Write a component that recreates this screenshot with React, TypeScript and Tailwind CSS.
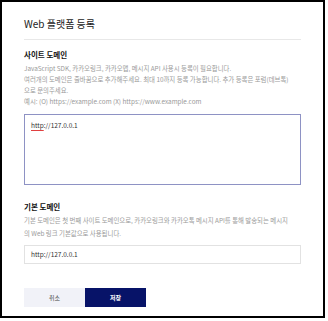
import React from 'react';

const font = { fontFamily: '"Noto Sans CJK KR", "Noto Sans", sans-serif' };

const App: React.FC = () => {
  return (
    <div className="w-[328px] h-[321px] bg-white" style={font}>
      <div className="w-[325px] h-[318px] border-2 border-black bg-white px-[22px] flex flex-col">
        <h1 className="mt-[15px] text-[10px] leading-[14px] text-[#222] font-normal">Web 플랫폼 등록</h1>
        <div className="mt-[8px] h-px bg-[#e8e8e8]" />

        <h2 className="mt-[9px] text-[7.5px] leading-[11px] font-bold text-[#111]">사이트 도메인</h2>
        <div className="mt-[3px] text-[6.4px] leading-[11px] text-[#9a9a9a] whitespace-nowrap">
          <p>JavaScript SDK, 카카오링크, 카카오맵, 메시지 API 사용시 등록이 필요합니다.</p>
          <p>여러개의 도메인은 줄바꿈으로 추가해주세요. 최대 10까지 등록 가능합니다. 추가 등록은 포럼(데브톡)</p>
          <p>으로 문의주세요.</p>
          <p>예시: (O) https://example.com (X) https://www.example.com</p>
        </div>
        <div className="mt-[7px] w-full h-[71px] border border-[#8e92c4] px-[6px] py-[5px] text-[6.5px] leading-[10px] text-[#333]">
          <span className="underline decoration-[#e04040] decoration-1 underline-offset-[2px]">http</span>://127.0.0.1
        </div>

        <h2 className="mt-[16px] text-[7.5px] leading-[11px] font-bold text-[#111]">기본 도메인</h2>
        <div className="mt-[2px] text-[6.4px] leading-[13px] text-[#9a9a9a] whitespace-nowrap">
          <p>기본 도메인은 첫 번째 사이트 도메인으로, 카카오링크와 카카오톡 메시지 API를 통해 발송되는 메시지</p>
          <p>의 Web 링크 기본값으로 사용됩니다.</p>
        </div>
        <div className="mt-[5px] h-[19px] border border-[#e2e2e2] px-[6px] flex items-center text-[6.5px] text-[#333]">
          http://127.0.0.1
        </div>

        <div className="mt-[24px] flex">
          <button className="w-[61px] h-[19px] bg-[#f1f2f8] text-[6px] text-[#444]">취소</button>
          <button className="w-[61px] h-[19px] bg-[#071368] text-[6px] text-white font-bold">저장</button>
        </div>
      </div>
    </div>
  );
};

export default App;
